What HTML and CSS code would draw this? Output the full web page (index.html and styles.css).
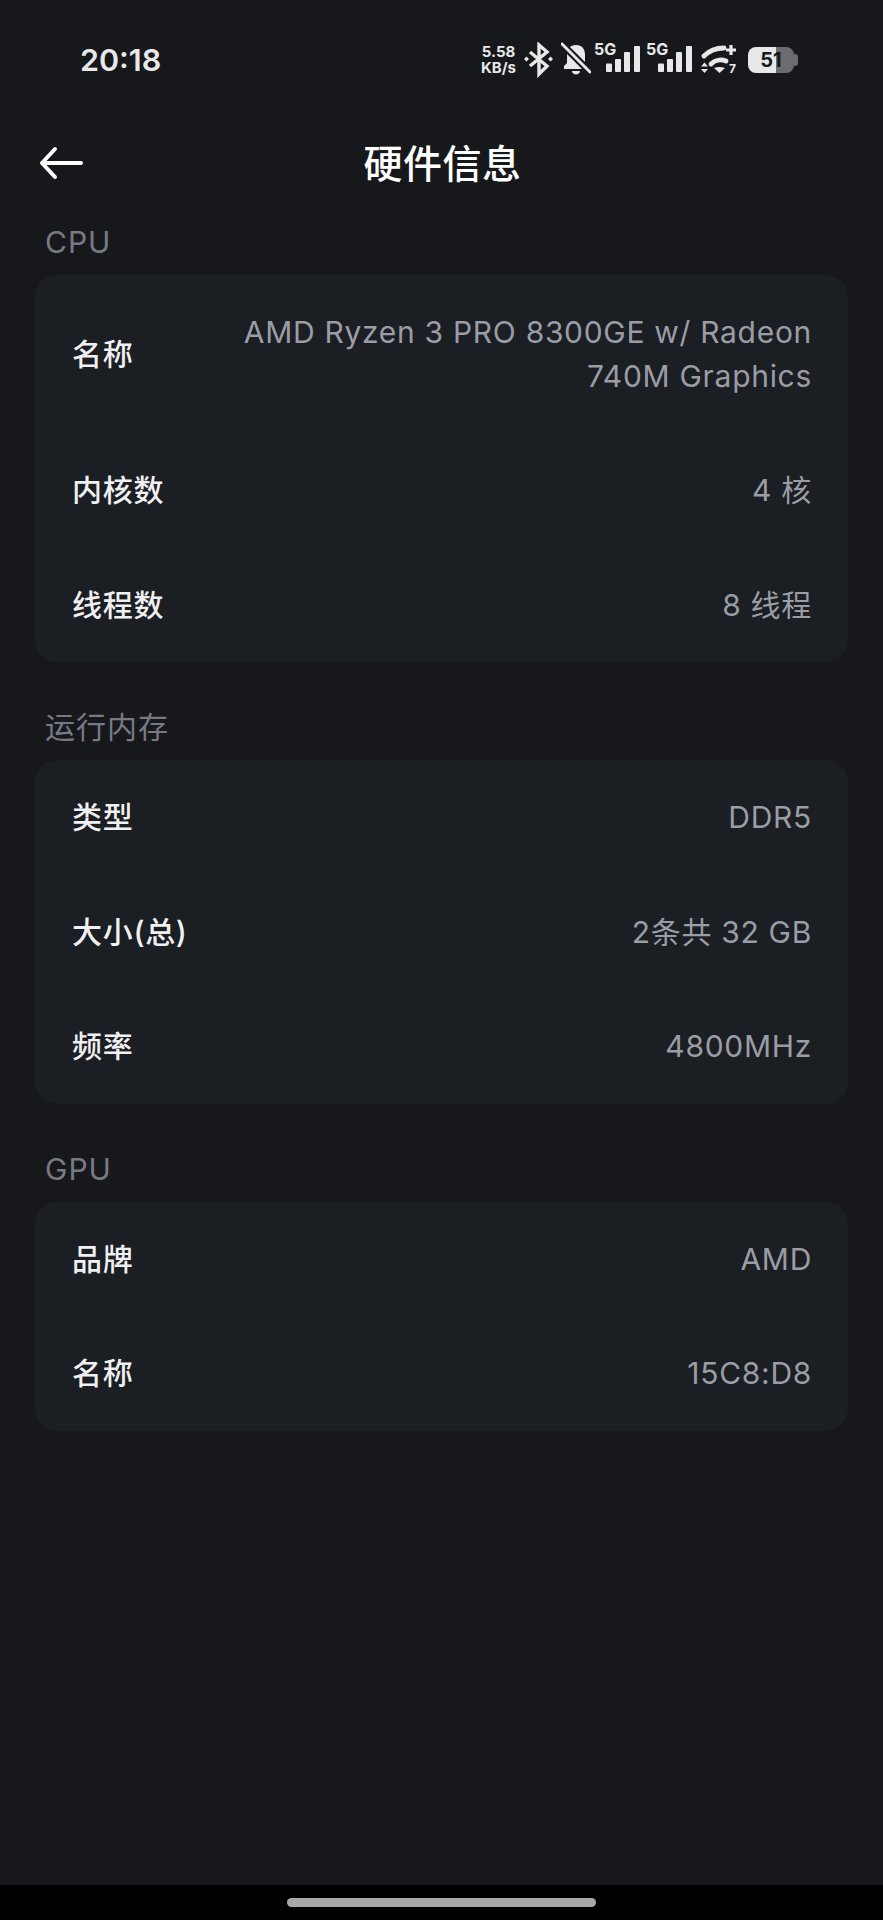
FILE: index.html
```html
<!DOCTYPE html>
<html lang="zh-CN">
<head>
    <meta charset="UTF-8">
    <meta name="viewport" content="width=device-width, initial-scale=1.0">
    <title>硬件信息</title>
    <link rel="stylesheet" href="styles.css">
</head>
<body>
    <div class="status-bar">
        <span class="status-time">20:18</span>
        <div class="status-icons">
            <div class="net-speed"><span>5.58</span><span>KB/s</span></div>
            <svg class="icon-bt" width="29" height="36" viewBox="0 0 29 36" fill="none" stroke="#e8e8ea" stroke-width="3.400" stroke-linejoin="miter">
                <path d="M6 10l17 14-8 8V3l8 7L6 24"/>
                <path d="M2.500 14.500L5 17l-2.500 2.500L0 17zM26.500 14.500L29 17l-2.500 2.500L24 17z" fill="#e8e8ea" stroke="none"/>
            </svg>
            <svg class="icon-bell" width="30" height="36" viewBox="0 0 30 36">
                <path d="M15 3c-6 0-9 4-9 10v8l-3 3v3h24v-3l-3-3v-8c0-6-3-10-9-10z" fill="#e8e8ea"/>
                <path d="M11 29h8c0 2-2 3.500-4 3.500s-4-1.500-4-3.500z" fill="#e8e8ea"/>
                <path d="M1 2l28 28" stroke="#17181c" stroke-width="7"/>
                <path d="M1 2l28 28" stroke="#e8e8ea" stroke-width="3" stroke-linecap="round"/>
            </svg>
            <svg class="icon-signal" width="46" height="42" viewBox="0 0 46 42" fill="#e8e8ea">
                <text x="0" y="16" class="signal-label">5G</text>
                <rect x="12" y="24.500" width="6" height="8.500" rx="1"/>
                <rect x="21" y="20" width="6" height="13" rx="1"/>
                <rect x="30" y="13" width="6" height="20" rx="1"/>
                <rect x="40" y="7" width="6" height="26" rx="1"/>
            </svg>
            <svg class="icon-signal icon-signal-second" width="46" height="42" viewBox="0 0 46 42" fill="#e8e8ea">
                <text x="0" y="16" class="signal-label">5G</text>
                <rect x="12" y="24.500" width="6" height="8.500" rx="1"/>
                <rect x="21" y="20" width="6" height="13" rx="1"/>
                <rect x="30" y="13" width="6" height="20" rx="1"/>
                <rect x="40" y="7" width="6" height="26" rx="1"/>
            </svg>
            <svg class="icon-wifi" width="37" height="36" viewBox="0 0 37 36" fill="none" stroke="#e8e8ea" stroke-linecap="round">
                <path d="M3 14c5-5 12-8 20-8" stroke-width="4.800"/>
                <path d="M10 22c4-4 10-5 15-3" stroke-width="4.800"/>
                <path d="M13 26c3.500-1.500 7.500-1.500 11 0l-5.500 5z" fill="#e8e8ea" stroke="none"/>
                <path d="M25 8h10M30 3v10" stroke-width="3.200" stroke-linecap="butt"/>
                <path d="M0 24.500l3.500-4 3.500 4zM0 27l3.500 4 3.500-4z" fill="#e8e8ea" stroke="none"/>
                <text x="28" y="31" class="wifi-label">7</text>
            </svg>
            <div class="battery">
                <div class="battery-body"><span class="battery-level">51</span></div>
                <div class="battery-cap"></div>
            </div>
        </div>
    </div>

    <div class="nav-bar">
        <svg class="back-icon" width="45" height="34" viewBox="0 0 45 34" fill="none" stroke="#fff" stroke-width="4" stroke-linecap="round" stroke-linejoin="round">
            <path d="M42 17H3M16 3L3 17l13 14"/>
        </svg>
        <div class="nav-title">硬件信息</div>
    </div>

    <div class="content">
        <div class="section-title">CPU</div>
        <div class="card">
            <div class="row">
                <div class="row-label">名称</div>
                <div class="row-value row-value-wide">AMD Ryzen 3 PRO 8300GE w/ Radeon 740M Graphics</div>
            </div>
            <div class="row">
                <div class="row-label">内核数</div>
                <div class="row-value">4 核</div>
            </div>
            <div class="row">
                <div class="row-label">线程数</div>
                <div class="row-value">8 线程</div>
            </div>
        </div>

        <div class="section-title">运行内存</div>
        <div class="card">
            <div class="row">
                <div class="row-label">类型</div>
                <div class="row-value">DDR5</div>
            </div>
            <div class="row">
                <div class="row-label">大小(总)</div>
                <div class="row-value">2条共 32 GB</div>
            </div>
            <div class="row">
                <div class="row-label">频率</div>
                <div class="row-value">4800MHz</div>
            </div>
        </div>

        <div class="section-title">GPU</div>
        <div class="card">
            <div class="row">
                <div class="row-label">品牌</div>
                <div class="row-value">AMD</div>
            </div>
            <div class="row">
                <div class="row-label">名称</div>
                <div class="row-value">15C8:D8</div>
            </div>
        </div>
    </div>

    <div class="gesture-bar">
        <div class="gesture-pill"></div>
    </div>
</body>
</html>
```

FILE: styles.css
```css
* {
    margin: 0;
    padding: 0;
    box-sizing: border-box;
}

body {
    height: 1920px;
    display: flex;
    flex-direction: column;
    background: #17181c;
    font-family: 'Inter', 'Noto Sans CJK SC', sans-serif;
    overflow: hidden;
}

.status-bar {
    height: 120px;
    padding: 0 85px 0 80px;
    display: flex;
    justify-content: space-between;
    align-items: center;
    color: #e8e8ea;
}

.status-time {
    padding-bottom: 2px;
    font-size: 30.500px;
    font-weight: 600;
}

.status-icons {
    display: flex;
    align-items: center;
}

.net-speed {
    width: 35px;
    display: flex;
    flex-direction: column;
    align-items: center;
    font-size: 15px;
    font-weight: 700;
    line-height: 16px;
    white-space: nowrap;
}

.icon-bt {
    margin-left: 8px;
}

.icon-bell {
    margin-left: 8px;
}

.icon-signal {
    margin-left: 3px;
}

.icon-signal-second {
    margin-left: 6px;
}

.icon-wifi {
    margin-left: 9px;
}

.signal-label {
    font-size: 16px;
    font-weight: 700;
}

.wifi-label {
    font-size: 12px;
    font-weight: 700;
    fill: #e8e8ea;
    stroke: none;
}

.battery {
    margin-left: 10px;
    display: flex;
    align-items: center;
}

.battery-body {
    width: 46px;
    height: 26px;
    border-radius: 8px;
    background: linear-gradient(90deg, #e8e8ea 60%, #6b6c70 60%);
    display: flex;
    justify-content: center;
    align-items: center;
}

.battery-level {
    font-size: 20px;
    font-weight: 700;
    color: #17181c;
}

.battery-cap {
    width: 4px;
    height: 12px;
    border-radius: 0 3px 3px 0;
    background: #6b6c70;
}

.nav-bar {
    height: 86px;
    padding: 0 39px;
    display: flex;
    align-items: center;
    position: relative;
}

.nav-title {
    position: absolute;
    left: 0;
    right: 0;
    padding: 0 0 5px 2px;
    text-align: center;
    font-size: 39px;
    font-weight: 500;
    letter-spacing: 0.500px;
    color: #fff;
}

.content {
    flex: 1;
    padding: 1px 35px 0;
}

.section-title {
    height: 68px;
    padding: 13px 0 0 10px;
    font-size: 30px;
    line-height: 44px;
    letter-spacing: 1px;
    color: #777a84;
}

.card {
    background: #1b1e23;
    border-radius: 22px;
    margin-bottom: 30px;
}

.row {
    min-height: 114.500px;
    padding: 35px 36px 35px 37px;
    display: flex;
    justify-content: space-between;
    align-items: center;
    font-size: 30px;
    line-height: 44px;
    letter-spacing: 0.700px;
}

.row-label {
    flex: none;
    font-weight: 500;
    color: #f0f0f2;
}

.row-value {
    text-align: right;
    color: #9a9da5;
}

.row-value-wide {
    width: 590px;
}

.gesture-bar {
    height: 35px;
    background: #000;
    display: flex;
    justify-content: center;
    align-items: center;
}

.gesture-pill {
    width: 309px;
    height: 9px;
    border-radius: 5px;
    background: #a8a8a8;
}
```
